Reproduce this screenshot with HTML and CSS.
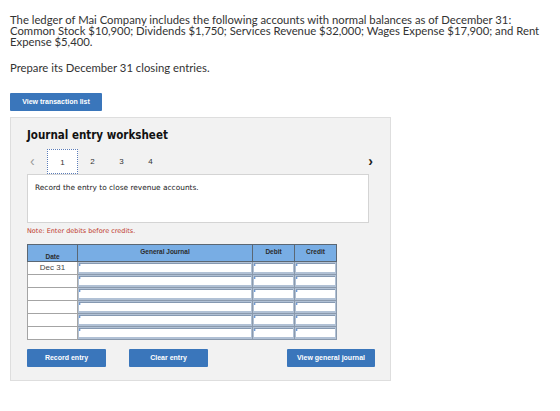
FILE: index.html
```html
<!DOCTYPE html>
<html lang="en">

<head>
  <meta charset="UTF-8">
  <meta name="viewport" content="width=device-width, initial-scale=1.0">
  <title>Journal entry worksheet</title>
  <link rel="stylesheet" href="styles.css">
</head>

<body>
  <div class="question">
    <p class="intro">The ledger of Mai Company includes the following accounts with normal balances as of December 31: Common Stock $10,900; Dividends $1,750; Services Revenue $32,000; Wages Expense $17,900; and Rent Expense $5,400.</p>
    <p class="task">Prepare its December 31 closing entries.</p>
  </div>

  <button class="btn btn-list">View transaction list</button>

  <div class="worksheet">
    <h2 class="title">Journal entry worksheet</h2>

    <div class="tabs">
      <span class="arrow prev">&lsaquo;</span>
      <span class="tab active">1</span>
      <span class="tab">2</span>
      <span class="tab">3</span>
      <span class="tab">4</span>
      <span class="arrow next">&rsaquo;</span>
    </div>

    <div class="prompt">Record the entry to close revenue accounts.</div>

    <p class="note">Note: Enter debits before credits.</p>

    <table class="journal">
      <thead>
        <tr>
          <th class="col-date">Date</th>
          <th class="col-account">General Journal</th>
          <th class="col-amount">Debit</th>
          <th class="col-amount">Credit</th>
        </tr>
      </thead>
      <tbody>
        <tr>
          <td class="date">Dec 31</td>
          <td class="field"><span></span></td>
          <td class="field"><span></span></td>
          <td class="field"><span></span></td>
        </tr>
        <tr>
          <td class="date"></td>
          <td class="field"><span></span></td>
          <td class="field"><span></span></td>
          <td class="field"><span></span></td>
        </tr>
        <tr>
          <td class="date"></td>
          <td class="field"><span></span></td>
          <td class="field"><span></span></td>
          <td class="field"><span></span></td>
        </tr>
        <tr>
          <td class="date"></td>
          <td class="field"><span></span></td>
          <td class="field"><span></span></td>
          <td class="field"><span></span></td>
        </tr>
        <tr>
          <td class="date"></td>
          <td class="field"><span></span></td>
          <td class="field"><span></span></td>
          <td class="field"><span></span></td>
        </tr>
        <tr>
          <td class="date"></td>
          <td class="field"><span></span></td>
          <td class="field"><span></span></td>
          <td class="field"><span></span></td>
        </tr>
      </tbody>
    </table>

    <div class="actions">
      <button class="btn">Record entry</button>
      <button class="btn">Clear entry</button>
      <button class="btn btn-wide">View general journal</button>
    </div>
  </div>
</body>

</html>
```

FILE: styles.css
```css
* {
  margin: 0;
  padding: 0;
  box-sizing: border-box;
}

body {
  padding: 14px 10px 0;
  font-family: "Lato", "Liberation Sans", sans-serif;
  color: #333;
  background: #fff;
}

.question {
  width: 546px;
  font-size: 11.3px;
  line-height: 11px;
}

.question .task {
  margin-top: 14.5px;
}

.btn {
  display: block;
  height: 18px;
  border: none;
  border-radius: 1px;
  background-color: #3a76bb;
  color: #fff;
  font-family: "Liberation Sans", sans-serif;
  font-weight: bold;
  font-size: 7px;
  cursor: pointer;
}

.btn-list {
  width: 92px;
  margin-top: 20px;
}

.worksheet {
  width: 381px;
  margin-top: 6px;
  padding: 10px 21px 13px 16px;
  background-color: #f2f2f2;
  border: 1px solid #dedede;
}

.title {
  font-family: "DejaVu Sans", sans-serif;
  font-stretch: condensed;
  font-size: 11.5px;
  line-height: 14px;
  color: #111;
}

.tabs {
  display: flex;
  align-items: center;
  height: 25px;
  margin-top: 7px;
  font-family: "Liberation Sans", sans-serif;
  font-size: 8px;
  color: #333;
}

.tabs .arrow {
  font-size: 14px;
  line-height: 14px;
}

.tabs .prev {
  width: 20px;
  padding-left: 3px;
  color: #999;
}

.tabs .next {
  margin-left: auto;
  margin-right: -4px;
  color: #222;
  font-weight: bold;
}

.tab {
  width: 29px;
  height: 25px;
  line-height: 25px;
  text-align: center;
}

.tab.active {
  width: 31px;
  position: relative;
  z-index: 1;
  background-color: #fff;
  border: 1px dotted #5b7cb8;
  margin-bottom: -1px;
}

.prompt {
  height: 49px;
  padding: 8px 7px;
  background-color: #fff;
  border: 1px solid #d4d4d4;
  font-family: "DejaVu Sans", sans-serif;
  font-size: 7.4px;
  color: #222;
}

.note {
  margin-top: 4px;
  font-family: "DejaVu Sans", sans-serif;
  font-size: 6.5px;
  line-height: 8px;
  color: #c0392b;
}

.journal {
  width: 310px;
  margin-top: 9px;
  border-collapse: collapse;
  table-layout: fixed;
  font-family: "Liberation Sans", sans-serif;
}

.journal th {
  height: 17px;
  background-color: #78ade4;
  border: 1px solid #5b6773;
  font-size: 6.5px;
  color: #2b2b2b;
  vertical-align: middle;
}

.journal .col-date {
  width: 50px;
  vertical-align: bottom;
  padding-bottom: 1px;
}

.journal .col-account {
  width: 175px;
  padding-bottom: 3px;
}

.journal .col-amount {
  width: 42px;
  padding-bottom: 3px;
}

.journal td {
  height: 13px;
}

.journal .date {
  background-color: #fff;
  border: 1px solid #a4a4a4;
  text-align: center;
  font-size: 8px;
  color: #444;
}

.journal .field {
  padding: 1px;
  background-color: #b1c1d5;
  border: 1px solid #8b9aad;
  border-left-color: #55606c;
}

.journal .field span {
  display: block;
  position: relative;
  height: 9px;
  background-color: #fff;
  border-top: 1px solid #8699b1;
}

.journal .field span::before {
  content: "";
  position: absolute;
  left: 0;
  top: 0;
  border-top: 1.5px solid transparent;
  border-bottom: 1.5px solid transparent;
  border-left: 2.5px solid #3c78c8;
}

.actions {
  display: flex;
  width: 348px;
  margin-top: 9px;
}

.actions .btn {
  width: 79px;
  margin-right: 23px;
}

.actions .btn-wide {
  width: 88px;
  margin-left: auto;
  margin-right: 0;
}
```
